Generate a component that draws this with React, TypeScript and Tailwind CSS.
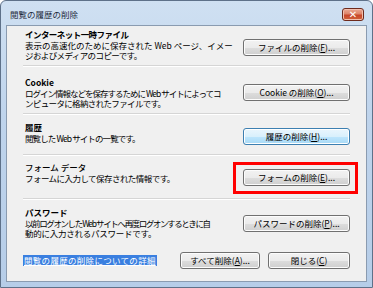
import type { ReactNode } from 'react';

const font = { fontFamily: '"Noto Sans CJK JP", "Noto Sans", sans-serif' };

const Btn = ({ children, focused }: { children: ReactNode; focused?: boolean }) => (
  <div
    className={
      focused
        ? 'h-[17px] w-[107px] flex items-center justify-center rounded-[3px] border border-[#3c7fb1] bg-[linear-gradient(#eaf6fd_0%,#d9f0fc_50%,#bee6fd_51%,#a7d9f5_100%)] text-[8.5px] leading-none text-black shadow-[inset_0_0_0_1px_#ffffff]'
        : 'h-[17px] w-[107px] flex items-center justify-center rounded-[3px] border border-[#707070] bg-[linear-gradient(#f2f2f2_0%,#ebebeb_50%,#dddddd_51%,#cfcfcf_100%)] text-[8.5px] leading-none text-black shadow-[inset_0_0_0_1px_#fcfcfc]'
    }
  >
    {children}
  </div>
);

const Sep = () => <div className="h-px bg-[#d5d5d5] border-b border-white box-content" />;

export default function App() {
  return (
    <div className="w-[373px] h-[288px] bg-white" style={font}>
      <div className="w-[373px] h-[288px] rounded-t-[6px] border border-[#5e7189] bg-[linear-gradient(#cfe0f2_0%,#bfd4ec_40%,#b6cde8_100%)] flex flex-col">
        {/* Title bar */}
        <div className="h-[24px] flex items-start justify-between pl-[9px] pr-[8px]">
          <span className="mt-[9px] text-[8.5px] leading-none text-[#1e2b3c]">閲覧の履歴の削除</span>
          <div className="mt-[7px] w-[22px] h-[13px] rounded-[3px] border border-[#6e2a1c] bg-[linear-gradient(#eba894_0%,#dd8468_45%,#c8452a_55%,#d0643a_100%)] flex items-center justify-center shadow-[inset_0_0_0_1px_#f2bfae]">
            <span className="text-white text-[10px] font-bold leading-none" style={{ fontFamily: '"DejaVu Sans", sans-serif' }}>✕</span>
          </div>
        </div>

        {/* Client area */}
        <div className="mx-[5px] mb-[5px] flex-1 border border-[#8a9bb0] bg-[#f0f0f0] px-[16px] text-black">
          {/* Temp files */}
          <div className="h-[39px] pt-[3px] flex items-start justify-between">
            <div className="pl-[2px] text-[8.5px] whitespace-nowrap">
              <div className="font-bold leading-[11px] tracking-[-0.55px]">インターネット一時ファイル</div>
              <div className="leading-[10px]">表示の高速化のために保存された Web ページ、イメー</div>
              <div className="leading-[10px] tracking-[-0.6px]">ジおよびメディアのコピーです。</div>
            </div>
            <div className="mt-[10px] shrink-0">
              <Btn>ファイルの削除(<u>F</u>)...</Btn>
            </div>
          </div>
          <Sep />

          {/* Cookie */}
          <div className="h-[46px] pt-[10px] flex items-start justify-between">
            <div className="pl-[2px] text-[8.5px] whitespace-nowrap">
              <div className="font-bold leading-[11px]">Cookie</div>
              <div className="leading-[10px] tracking-[-1px]">ログイン情報などを保存するために Web サイトによってコ</div>
              <div className="leading-[10px] tracking-[-0.65px]">ンピュータに格納されたファイルです。</div>
            </div>
            <div className="mt-[7px] shrink-0">
              <Btn>Cookie の削除(<u>O</u>)...</Btn>
            </div>
          </div>
          <Sep />

          {/* History */}
          <div className="h-[39px] pt-[7px] flex items-start justify-between">
            <div className="pl-[2px] text-[8.5px] whitespace-nowrap">
              <div className="font-bold leading-[11px]">履歴</div>
              <div className="leading-[10px] tracking-[-0.9px]">閲覧した Web サイトの一覧です。</div>
            </div>
            <div className="mt-[6px] shrink-0">
              <Btn focused>履歴の削除(<u>H</u>)...</Btn>
            </div>
          </div>
          <Sep />

          {/* Form data */}
          <div className="h-[42px] pt-[6px] flex items-start justify-between">
            <div className="pl-[2px] text-[8.5px] whitespace-nowrap">
              <div className="leading-[11px] font-medium">フォーム データ</div>
              <div className="leading-[10px] tracking-[-0.55px]">フォームに入力して保存された情報です。</div>
            </div>
            <div className="mt-[7px] relative shrink-0">
              <Btn>フォームの削除(<u>E</u>)...</Btn>
              <div className="absolute -left-[10px] -right-[8px] -top-[7px] -bottom-[8px] border-[3px] border-[#ff0000]" />
            </div>
          </div>
          <Sep />

          {/* Password */}
          <div className="h-[46px] pt-[7px] flex items-start justify-between">
            <div className="pl-[2px] text-[8.5px] whitespace-nowrap">
              <div className="font-bold leading-[11px]">パスワード</div>
              <div className="leading-[10px] tracking-[-1.4px]">以前ログオンした Web サイトへ再度ログオンするときに自</div>
              <div className="leading-[10px] tracking-[-0.25px]">動的に入力されるパスワードです。</div>
            </div>
            <div className="mt-[8px] shrink-0">
              <Btn>パスワードの削除(<u>P</u>)...</Btn>
            </div>
          </div>

          {/* Bottom row */}
          <div className="mt-[6px] flex items-center justify-between">
            <span className="bg-[#3a7fe0] px-[1px] text-[8.5px] leading-[11px] tracking-[0.3px] text-white underline whitespace-nowrap">閲覧の履歴の削除についての詳細</span>
            <div className="flex gap-[8px]">
              <div className="w-[80px] h-[17px] flex items-center justify-center rounded-[3px] border border-[#707070] bg-[linear-gradient(#f2f2f2_0%,#ebebeb_50%,#dddddd_51%,#cfcfcf_100%)] text-[8.5px] leading-none shadow-[inset_0_0_0_1px_#fcfcfc]">
                すべて削除(<u>A</u>)...
              </div>
              <div className="w-[82px] h-[17px] flex items-center justify-center rounded-[3px] border border-[#707070] bg-[linear-gradient(#f2f2f2_0%,#ebebeb_50%,#dddddd_51%,#cfcfcf_100%)] text-[8.5px] leading-none shadow-[inset_0_0_0_1px_#fcfcfc]">
                閉じる(<u>C</u>)
              </div>
            </div>
          </div>
        </div>
      </div>
    </div>
  );
}
